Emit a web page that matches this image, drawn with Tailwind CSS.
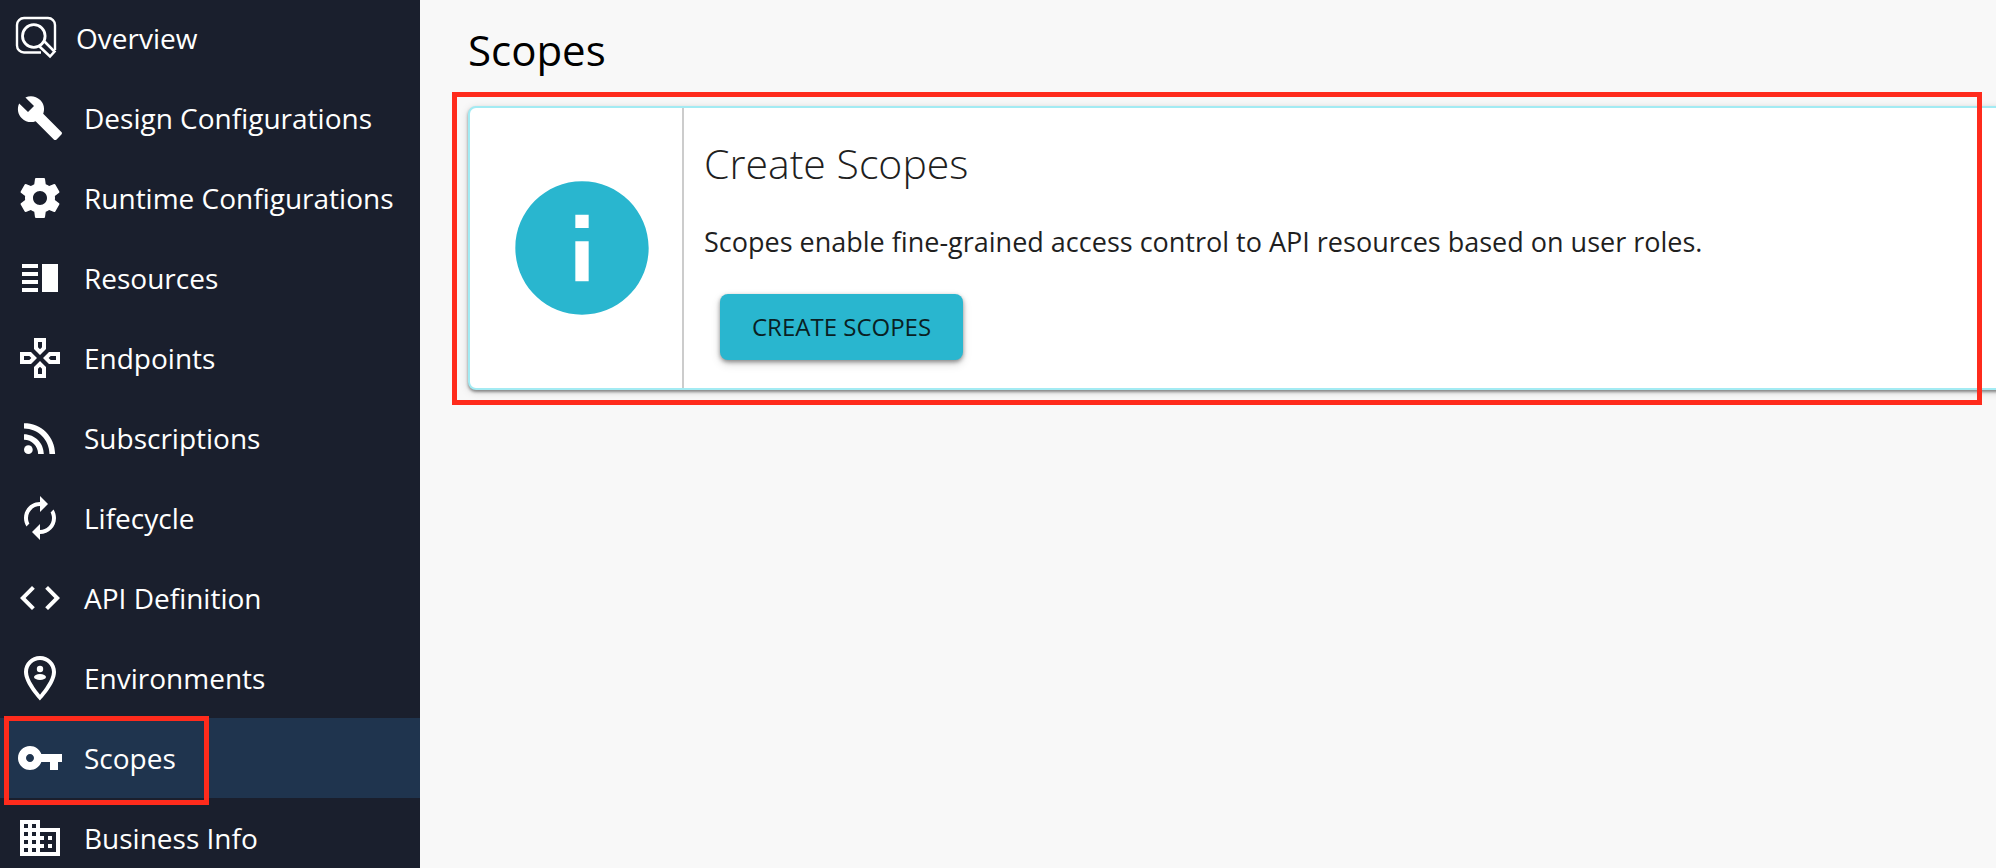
<!DOCTYPE html>
<html lang="en">
<head>
<meta charset="utf-8">
<title>Scopes</title>
<script src="https://cdn.jsdelivr.net/npm/@tailwindcss/browser@4"></script>
</head>
<body class="bg-[#f8f8f8] font-['Open_Sans','Noto_Sans',sans-serif] text-black">
<div class="flex h-screen overflow-hidden">
  <nav class="w-[420px] shrink-0 bg-[#1a1f2d] text-[28px] leading-10 text-white overflow-hidden">
    <a href="#" class="flex h-[78px] items-center gap-[14px] pb-[2px] pl-[14px]">
      <svg class="size-12 shrink-0" viewBox="0 0 48 48" fill="none" stroke="#fff">
        <path stroke-width="2.400" d="M27 38.500H10a7 7 0 0 1-7-7V11a7 7 0 0 1 7-7h24a7 7 0 0 1 7 7v25"/>
        <circle stroke-width="2.800" cx="19.800" cy="22" r="11.300"/>
        <path stroke-width="2.600" d="M25.500 32.500 36 42.500l4.500-5L30.500 27.500"/>
      </svg>
      <span class="pb-px">Overview</span></a>
    <a href="#" class="flex h-20 items-center gap-5 pl-4">
      <svg class="size-12 shrink-0" viewBox="0 0 24 24" fill="#fff"><path d="M22.700 19l-9.100-9.100c.9-2.300.4-5-1.500-6.900-2-2-5-2.400-7.400-1.300L9 6 6 9 1.600 4.700C.4 7.100.9 10.100 2.900 12.100c1.900 1.900 4.600 2.400 6.900 1.500l9.100 9.100c.4.4 1 .4 1.400 0l2.300-2.300c.5-.4.5-1.100.1-1.400z"/></svg>
      <span class="pb-px">Design Configurations</span></a>
    <a href="#" class="flex h-20 items-center gap-5 pl-4">
      <svg class="size-12 shrink-0" viewBox="0 0 24 24" fill="#fff"><path d="M19.430 12.980c.04-.32.070-.64.070-.98s-.03-.66-.07-.98l2.110-1.650c.19-.15.240-.42.120-.64l-2-3.460c-.12-.22-.39-.3-.61-.22l-2.490 1c-.52-.4-1.080-.73-1.690-.98l-.38-2.650C14.460 2.180 14.250 2 14 2h-4c-.25 0-.46.180-.49.420l-.38 2.650c-.61.250-1.170.590-1.690.980l-2.490-1c-.23-.09-.49 0-.61.220l-2 3.460c-.13.220-.07.490.120.640l2.110 1.650c-.04.320-.07.650-.07.980s.03.660.070.980l-2.110 1.650c-.19.150-.24.420-.12.640l2 3.460c.12.220.39.300.61.220l2.490-1c.52.400 1.080.730 1.690.980l.38 2.650c.03.240.240.420.490.420h4c.25 0 .46-.18.490-.42l.38-2.650c.61-.25 1.170-.59 1.690-.98l2.490 1c.23.090.490 0 .610-.22l2-3.460c.12-.22.070-.49-.12-.64l-2.110-1.650zM12 15.500c-1.930 0-3.500-1.570-3.500-3.500s1.570-3.500 3.500-3.500 3.500 1.570 3.500 3.500-1.570 3.500-3.500 3.500z"/></svg>
      <span class="pb-px">Runtime Configurations</span></a>
    <a href="#" class="flex h-20 items-center gap-5 pl-4">
      <svg class="size-12 shrink-0" viewBox="0 0 24 24" fill="#fff"><path d="M3 13h8v2H3zm0 4h8v2H3zm0-8h8v2H3zm0-4h8v2H3zm10 0h8v14h-8z"/></svg>
      <span class="pb-px">Resources</span></a>
    <a href="#" class="flex h-20 items-center gap-5 pl-4">
      <svg class="size-12 shrink-0" viewBox="0 0 24 24" fill="#fff"><path d="M13 4v2.670l-1 1-1-1V4h2m7 7v2h-2.670l-1-1 1-1H20M6.670 11l1 1-1 1H4v-2h2.670M12 16.330l1 1V20h-2v-2.670l1-1M15 2H9v5.500l3 3 3-3V2zm7 7h-5.500l-3 3 3 3H22V9zM7.500 9H2v6h5.500l3-3-3-3zm4.500 4.500l-3 3V22h6v-5.500l-3-3z"/></svg>
      <span class="pb-px">Endpoints</span></a>
    <a href="#" class="flex h-20 items-center gap-5 pl-4">
      <svg class="size-12 shrink-0" viewBox="0 0 24 24" fill="#fff"><circle cx="6.180" cy="17.820" r="2.180"/><path d="M4 4.440v2.830c7.030 0 12.730 5.700 12.730 12.730h2.830c0-8.590-6.970-15.560-15.560-15.560zm0 5.660v2.830c3.900 0 7.070 3.170 7.070 7.070h2.830c0-5.470-4.430-9.900-9.900-9.900z"/></svg>
      <span class="pb-px">Subscriptions</span></a>
    <a href="#" class="flex h-20 items-center gap-5 pl-4">
      <svg class="size-12 shrink-0" viewBox="0 0 24 24" fill="#fff"><path d="M12 4V1l4 4-4 4V6c-3.310 0-6 2.690-6 6 0 1.010.25 1.970.7 2.800l-1.460 1.460C4.460 15.030 4 13.570 4 12c0-4.420 3.580-8 8-8zm6.760 3.740L17.300 9.200c.44.840.7 1.790.7 2.800 0 3.310-2.690 6-6 6v-3l-4 4 4 4v-3c4.420 0 8-3.580 8-8 0-1.570-.46-3.030-1.240-4.260z"/></svg>
      <span class="pb-px">Lifecycle</span></a>
    <a href="#" class="flex h-20 items-center gap-5 pl-4">
      <svg class="size-12 shrink-0" viewBox="0 0 24 24" fill="#fff"><path d="M9.400 16.600L4.800 12l4.600-4.600L8 6l-6 6 6 6 1.400-1.400zm5.200 0l4.600-4.600-4.600-4.600L16 6l6 6-6 6-1.400-1.400z"/></svg>
      <span class="pb-px">API Definition</span></a>
    <a href="#" class="flex h-20 items-center gap-5 pl-4">
      <svg class="size-12 shrink-0" viewBox="0 0 24 24" fill="#fff"><path fill-rule="evenodd" d="M12 1c-4.420 0-8 3.580-8 8 0 6 8 14.200 8 14.200S20 15 20 9c0-4.420-3.580-8-8-8zm0 2c3.310 0 6 2.690 6 6 0 3.800-4.300 9.200-6 11.400C10.300 18.200 6 12.800 6 9c0-3.310 2.690-6 6-6z"/><circle cx="12" cy="7.500" r="1.600"/><ellipse cx="12" cy="11.500" rx="3" ry="1.500"/></svg>
      <span class="pb-px">Environments</span></a>
    <a href="#" aria-current="page" class="relative flex h-20 items-center gap-5 bg-[#1f344e] pl-4">
      <svg class="size-12 shrink-0" viewBox="0 0 24 24" fill="#fff"><path d="M12.650 10C11.830 7.670 9.610 6 7 6c-3.310 0-6 2.690-6 6s2.690 6 6 6c2.610 0 4.830-1.670 5.650-4H17v4h4v-4h2v-4H12.650zM7 14c-1.100 0-2-.9-2-2s.9-2 2-2 2 .9 2 2-.9 2-2 2z"/></svg>
      <span class="pb-px">Scopes</span>
      <span class="pointer-events-none absolute -top-[2px] left-1 h-[89px] w-[205px] border-5 border-[#ff2b1c]"></span></a>
    <a href="#" class="flex h-20 items-center gap-5 pl-4">
      <svg class="size-12 shrink-0" viewBox="0 0 24 24" fill="#fff"><path d="M12 7V3H2v18h20V7H12zM6 19H4v-2h2v2zm0-4H4v-2h2v2zm0-4H4V9h2v2zm0-4H4V5h2v2zm4 12H8v-2h2v2zm0-4H8v-2h2v2zm0-4H8V9h2v2zm0-4H8V5h2v2zm10 12h-8v-2h2v-2h-2v-2h2v-2h-2V9h8v10zm-2-8h-2v2h2v-2zm0 4h-2v2h2v-2z"/></svg>
      <span class="pb-px">Business Info</span></a>
  </nav>
  <main class="min-w-0 flex-1 pl-12">
    <h1 class="pt-5 text-[42px] leading-[60px]">Scopes</h1>
    <div class="relative mt-[26px]">
      <section class="-mr-4 flex rounded-lg border-2 border-[#a3ebf3] bg-white text-[#1f1f1f] shadow-[0_2px_3px_rgba(0,0,0,0.4),0_2px_8px_rgba(0,0,0,0.15)]">
        <div class="flex shrink-0 items-center border-r-2 border-[#cccccc] pr-5 pl-8">
          <svg class="size-40" viewBox="0 0 24 24" fill="#29b6cf"><path d="M12 2C6.480 2 2 6.480 2 12s4.480 10 10 10 10-4.480 10-10S17.520 2 12 2zm1 15h-2v-6h2v6zm0-8h-2V7h2v2z"/></svg>
        </div>
        <div class="px-5 pt-6 pb-7">
          <h2 class="text-[41px] font-light leading-[62px]">Create Scopes</h2>
          <p class="pt-7 text-[27px] leading-10">Scopes enable fine-grained access control to API resources based on user roles.</p>
          <button type="button" class="mt-8 ml-4 block h-[66px] rounded-lg bg-[#29b6cf] px-8 text-[24px] text-[#0a1f24] shadow-[0_2px_4px_rgba(0,0,0,0.4),0_4px_10px_rgba(0,0,0,0.15)]">CREATE SCOPES</button>
        </div>
      </section>
      <span class="pointer-events-none absolute -top-[14px] right-[14px] -bottom-[15px] -left-4 border-5 border-[#ff2b1c]"></span>
    </div>
  </main>
</div>
</body>
</html>
